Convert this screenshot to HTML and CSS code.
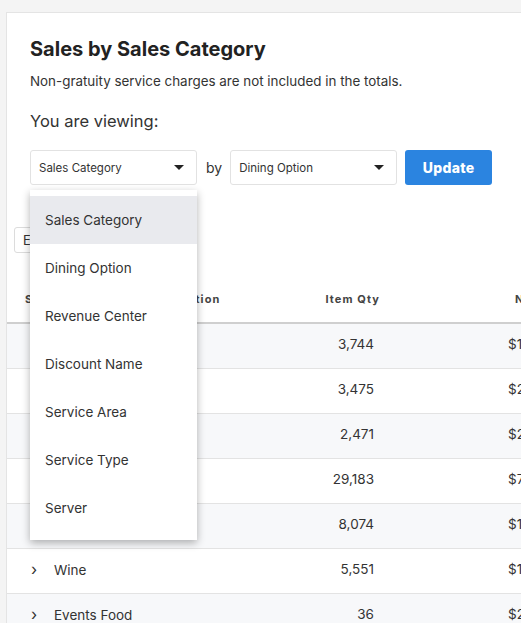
FILE: index.html
```html
<!DOCTYPE html>
<html>
<head>
<meta charset="utf-8">
<link rel="stylesheet" href="styles.css">
</head>
<body>
<div class="card">
  <div class="card-head">
    <h1 class="title">Sales by Sales Category</h1>
    <p class="note">Non-gratuity service charges are not included in the totals.</p>
    <p class="viewing">You are viewing:</p>
    <div class="controls">
      <div class="select-wrap">
        <div class="select">
          <span>Sales Category</span>
          <svg class="caret" width="10" height="5" viewBox="0 0 10 5"><path d="M0 0h10L5 5z" fill="#222"/></svg>
        </div>
        <ul class="menu">
          <li class="menu-item active">Sales Category</li>
          <li class="menu-item">Dining Option</li>
          <li class="menu-item">Revenue Center</li>
          <li class="menu-item">Discount Name</li>
          <li class="menu-item">Service Area</li>
          <li class="menu-item">Service Type</li>
          <li class="menu-item">Server</li>
        </ul>
      </div>
      <span class="by">by</span>
      <div class="select">
        <span>Dining Option</span>
        <svg class="caret" width="10" height="5" viewBox="0 0 10 5"><path d="M0 0h10L5 5z" fill="#222"/></svg>
      </div>
      <button class="update">Update</button>
    </div>
  </div>
  <div class="toolbar">
    <button class="expand">Expand All</button>
  </div>
  <table class="grid">
    <colgroup>
      <col class="c1"><col class="c2"><col class="c3"><col class="c4">
    </colgroup>
    <thead>
      <tr>
        <th class="h1">Sales Category</th>
        <th class="h2">Dining Option</th>
        <th class="h3">Item Qty</th>
        <th class="h4">Net</th>
      </tr>
    </thead>
    <tbody>
      <tr><td class="name"><span class="chev">›</span>Food</td><td></td><td class="qty">3,744</td><td class="amt">$1</td></tr>
      <tr><td class="name"><span class="chev">›</span>Liquor</td><td></td><td class="qty">3,475</td><td class="amt">$24</td></tr>
      <tr><td class="name"><span class="chev">›</span>Beer</td><td></td><td class="qty">2,471</td><td class="amt">$20</td></tr>
      <tr><td class="name"><span class="chev">›</span>Dinner</td><td></td><td class="qty">29,183</td><td class="amt">$767</td></tr>
      <tr><td class="name"><span class="chev">›</span>Lunch</td><td></td><td class="qty">8,074</td><td class="amt">$110</td></tr>
      <tr><td class="name"><span class="chev">›</span>Wine</td><td></td><td class="qty">5,551</td><td class="amt">$103</td></tr>
      <tr><td class="name"><span class="chev">›</span>Events Food</td><td></td><td class="qty">36</td><td class="amt">$2</td></tr>
    </tbody>
  </table>
</div>
</body>
</html>
```
FILE: styles.css
```css
html, body {
  margin: 0;
  padding: 0;
}
body {
  background: #f4f4f4;
  font-family: "Inter", "Liberation Sans", sans-serif;
  color: #2b2b2b;
  overflow: hidden;
  height: 623px;
}
.card {
  margin: 12px 0 0 6px;
  width: 720px;
  background: #fff;
  border: 1px solid #e4e4e4;
  height: 700px;
}
.card-head {
  padding: 22px 0 0 23px;
}
.title {
  margin: 0;
  font-size: 20px;
  line-height: 28px;
  font-weight: 700;
  color: #222;
}
.note {
  margin: 10px 0 0;
  font-size: 13.4px;
  line-height: 16px;
  color: #333;
}
.viewing {
  margin: 21px 0 0;
  font-size: 16.5px;
  line-height: 22px;
  color: #333;
}
.controls {
  margin-top: 18px;
  display: flex;
  align-items: center;
}
.select-wrap {
  position: relative;
}
.select {
  width: 167px;
  height: 35px;
  box-sizing: border-box;
  border: 1px solid #e2e2e2;
  border-radius: 3px;
  display: flex;
  align-items: center;
  justify-content: space-between;
  padding: 0 12px 0 8px;
  font-size: 11.5px;
  color: #333;
}
.caret {
  display: block;
}
.by {
  font-size: 14px;
  color: #333;
  margin: 0 8px 0 9px;
}
.update {
  margin-left: 8px;
  width: 87px;
  height: 35px;
  border: none;
  border-radius: 3px;
  background: #2b84e0;
  color: #fff;
  font-family: "Inter", "Liberation Sans", sans-serif;
  font-weight: 800;
  font-size: 14px;
  letter-spacing: 0.3px;
}
.menu {
  position: absolute;
  top: 40px;
  left: 0;
  width: 167px;
  margin: 0;
  padding: 6px 0 8px;
  list-style: none;
  background: #fff;
  box-shadow: 0 3px 8px rgba(0, 0, 0, 0.3);
  z-index: 5;
}
.menu-item {
  height: 48px;
  line-height: 48px;
  padding-left: 15px;
  font-size: 13.5px;
  color: #333;
}
.menu-item.active {
  background: #e9eaee;
}
.toolbar {
  padding: 42px 0 0 7px;
}
.expand {
  height: 26px;
  border: 1px solid #dcdcdc;
  border-radius: 3px;
  background: #fff;
  font-family: "Inter", "Liberation Sans", sans-serif;
  font-size: 13px;
  color: #333;
  padding: 0 8px;
}
.grid {
  margin-top: 23px;
  border-collapse: collapse;
  table-layout: fixed;
  width: 713px;
}
.c1 { width: 110px; }
.c2 { width: 120px; }
.c3 { width: 148px; }
.c4 { width: 335px; }
.grid th {
  height: 46px;
  padding: 0;
  font-size: 11px;
  font-weight: 700;
  letter-spacing: 1.1px;
  color: #444;
  border-bottom: 2px solid #cfcfcf;
  vertical-align: middle;
}
.grid th.h1 { text-align: left; padding-left: 18px; white-space: nowrap; }
.grid th.h2 { text-align: left; padding-left: 16px; white-space: nowrap; }
.grid th.h3 { text-align: right; padding-right: 5px; }
.grid th.h4 { text-align: left; padding-left: 130px; }
.grid td {
  height: 45px;
  padding: 0 0 3px;
  box-sizing: border-box;
  font-size: 13.5px;
  color: #333;
  border-bottom: 1px solid #e3e3e3;
  white-space: nowrap;
}
.grid tbody tr:nth-child(odd) td {
  background: #f7f8fa;
}
.name {
  padding-left: 24px !important;
}
.chev {
  display: inline-block;
  width: 23px;
  font-size: 16px;
  color: #333;
}
.qty {
  text-align: right;
  padding-right: 11px !important;
}
.amt {
  padding-left: 123px !important;
}
```
